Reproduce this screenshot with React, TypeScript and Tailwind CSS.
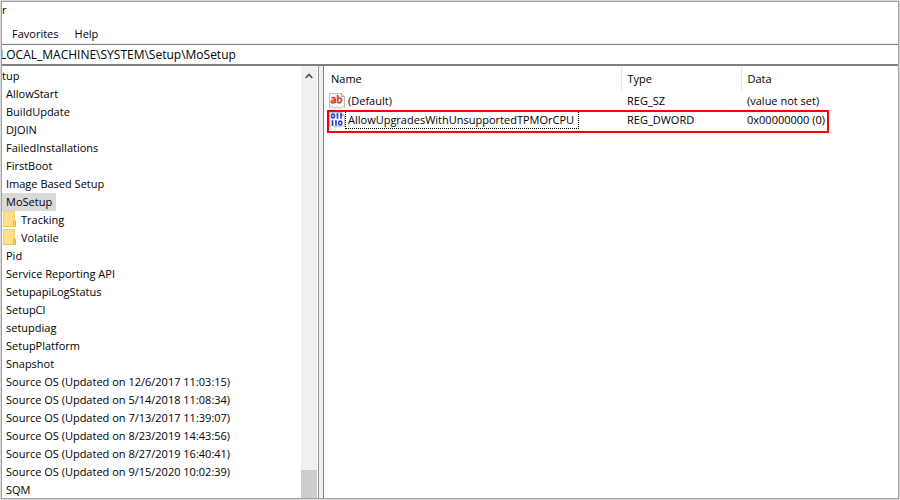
import clsx from "clsx";

type TreeKey = { name: string; depth: number };

const keys: TreeKey[] = [
  { name: "tup", depth: 0 },
  { name: "AllowStart", depth: 1 },
  { name: "BuildUpdate", depth: 1 },
  { name: "DJOIN", depth: 1 },
  { name: "FailedInstallations", depth: 1 },
  { name: "FirstBoot", depth: 1 },
  { name: "Image Based Setup", depth: 1 },
  { name: "MoSetup", depth: 1 },
  { name: "Tracking", depth: 2 },
  { name: "Volatile", depth: 2 },
  { name: "Pid", depth: 1 },
  { name: "Service Reporting API", depth: 1 },
  { name: "SetupapiLogStatus", depth: 1 },
  { name: "SetupCl", depth: 1 },
  { name: "setupdiag", depth: 1 },
  { name: "SetupPlatform", depth: 1 },
  { name: "Snapshot", depth: 1 },
  { name: "Source OS (Updated on 12/6/2017 11:03:15)", depth: 1 },
  { name: "Source OS (Updated on 5/14/2018 11:08:34)", depth: 1 },
  { name: "Source OS (Updated on 7/13/2017 11:39:07)", depth: 1 },
  { name: "Source OS (Updated on 8/23/2019 14:43:56)", depth: 1 },
  { name: "Source OS (Updated on 8/27/2019 16:40:41)", depth: 1 },
  { name: "Source OS (Updated on 9/15/2020 10:02:39)", depth: 1 },
  { name: "SQM", depth: 1 },
];

function FolderIcon() {
  return (
    <svg className="h-4 w-3.5 shrink-0" viewBox="0 0 14 16" aria-hidden="true">
      <path d="M0 0h12v9l1 1v6H0z" fill="#f3d066" />
      <path d="M1 1h10v9l-1 5H1z" fill="#ffe08a" />
      <path d="M10 15V11l1-2v6zM12 10h1v5h-1z" fill="#e3b53f" />
      <path d="M0 15h13v1H0z" fill="#eac355" />
    </svg>
  );
}

// page with a torn bottom and right edge, shared by both value icons
function Sheet() {
  return (
    <>
      <path d="M.5.5h12l3 3v11l-2-1-2 1.5-3-1-3 1-2-1.5-3 1z" fill="#fafafa" stroke="#bdbdbd" />
      <path d="M12.5.5v3h3" fill="none" stroke="#a8a8a8" />
    </>
  );
}

function StringIcon() {
  return (
    <svg className="h-4 w-4 shrink-0" viewBox="0 0 16 16" aria-hidden="true">
      <Sheet />
      <g fill="none" stroke="#d9482b" strokeWidth="1.8">
        <path d="M2.5 5.3c1-.9 3.7-.9 3.7.8V10M6.2 7.4C3.8 7 2.3 7.6 2.3 8.7c0 1.6 3 1.4 3.9-.2" />
        <path d="M8.7 2v8M8.7 6c1-1.5 3.9-1.2 3.9 1.3S9.7 10.6 8.7 8.9" />
      </g>
    </svg>
  );
}

function BinaryIcon() {
  return (
    <svg className="h-4 w-4 shrink-0" viewBox="0 0 16 16" aria-hidden="true">
      <Sheet />
      <g fill="none" stroke="#2142dc" strokeWidth="1.6">
        <rect x="2.5" y="2" width="3" height="4" rx="1.5" />
        <path d="M8.5 1.3v5.4M12 1.3v5.4M7.5 2.1h1M11 2.1h1" />
        <path d="M3.5 8.3v5.4M7 8.3v5.4M2.5 9.1h1M6 9.1h1" />
        <rect x="9.7" y="9" width="3" height="4" rx="1.5" />
      </g>
    </svg>
  );
}

function TreeItem({ item, selected }: { item: TreeKey; selected: boolean }) {
  return (
    <li className={clsx("flex", item.depth === 2 && "pl-px")}>
      {item.depth === 2 && <FolderIcon />}
      <button
        type="button"
        className={clsx(
          "h-[18px] whitespace-nowrap leading-4",
          item.depth === 0 && "pr-1",
          item.depth > 0 && "px-1",
          selected && "bg-[#d9d9d9]",
        )}
      >
        {item.name}
      </button>
    </li>
  );
}

function ScrollTrack() {
  return (
    <div className="flex w-4 shrink-0 flex-col justify-between bg-[#f0f0f0]">
      <button type="button" aria-label="Scroll up" className="flex h-5 items-center justify-center">
        <svg className="h-2 w-2" viewBox="0 0 8 8" aria-hidden="true">
          <path d="M.7 6 4 2.5 7.3 6" fill="none" stroke="#505050" strokeWidth="1.7" />
        </svg>
      </button>
      <div className="h-7 bg-[#cdcdcd]" />
    </div>
  );
}

function ValueTable() {
  return (
    <div className="relative">
      <table className="w-full table-fixed text-left">
        <colgroup>
          <col className="w-[297px]" />
          <col className="w-[120px]" />
          <col />
        </colgroup>
        <thead>
          <tr className="h-[25px]">
            <th className="border-r border-[#e5e5e5] pl-[7px] font-normal">Name</th>
            <th className="border-r border-[#e5e5e5] pl-1.5 font-normal">Type</th>
            <th className="pl-1.5 font-normal">Data</th>
          </tr>
        </thead>
        <tbody>
          <tr className="h-[19px]">
            <td className="pl-[5px]">
              <div className="flex items-center gap-px">
                <StringIcon />
                <span className="px-0.5">(Default)</span>
              </div>
            </td>
            <td className="pl-1.5">REG_SZ</td>
            <td className="pl-1.5">(value not set)</td>
          </tr>
          <tr className="h-5">
            <td className="pl-[5px]">
              <div className="flex items-center">
                <BinaryIcon />
                <span className="border border-dotted border-black pl-0.5 pr-1 leading-4">
                  AllowUpgradesWithUnsupportedTPMOrCPU
                </span>
              </div>
            </td>
            <td className="pl-1.5">REG_DWORD</td>
            <td className="pl-1.5">0x00000000 (0)</td>
          </tr>
        </tbody>
      </table>
      <div className="pointer-events-none absolute left-[3px] top-11 h-[23px] w-[502px] border-2 border-[#fe0000]" />
    </div>
  );
}

export default function App() {
  return (
    <div className="h-screen overflow-hidden bg-[#dadada] p-px font-['Open_Sans',sans-serif] text-[11px] leading-4 text-black">
      <main className="flex h-full flex-col overflow-hidden border border-[#a0a0a0] bg-white">
        <header className="h-[22px]">r</header>
        <nav className="flex h-5 items-center gap-4 border-b border-[#f0f0f0] pl-2.5">
          <button type="button">Favorites</button>
          <button type="button">Help</button>
        </nav>
        <div className="h-[22px] border-b-2 border-t border-[#808080]">
          <input
            aria-label="Key path"
            className="block h-[19px] w-full -indent-0.5 text-[12px] outline-none"
            defaultValue="LOCAL_MACHINE\SYSTEM\Setup\MoSetup"
          />
        </div>
        <div className="flex min-h-0 flex-1">
          <aside className="flex w-[317px] shrink-0 justify-between border-r border-[#909090] pr-px">
            <ul className="overflow-hidden pt-px">
              {keys.map((k) => (
                <TreeItem key={k.name} item={k} selected={k.name === "MoSetup"} />
              ))}
            </ul>
            <ScrollTrack />
          </aside>
          <div className="w-1 shrink-0 bg-[#f0f0f0]" />
          <section className="min-w-0 flex-1 border-l border-[#808080]">
            <ValueTable />
          </section>
        </div>
      </main>
    </div>
  );
}
